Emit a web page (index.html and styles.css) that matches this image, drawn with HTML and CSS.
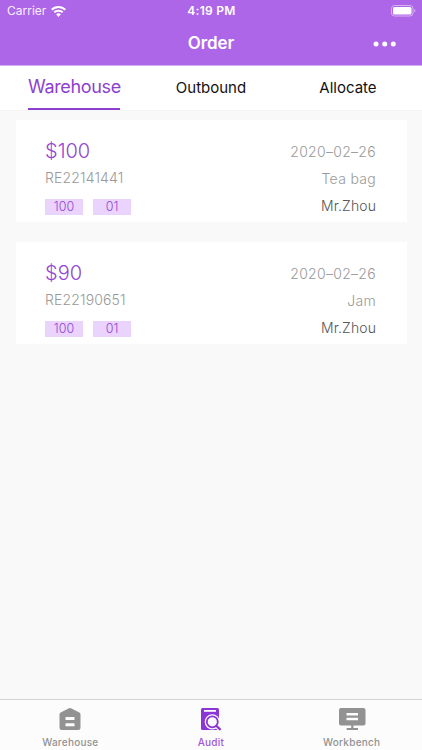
FILE: index.html
```html
<!DOCTYPE html>
<html lang="en">
<head>
<meta charset="utf-8">
<title>Order</title>
<link rel="stylesheet" href="styles.css">
</head>
<body>
<header class="header">
  <div class="status">
    <div class="carrier"><span>Carrier</span>
      <svg class="wifi" width="15" height="11" viewBox="0 0 15 11" fill="#fff"><path d="M7.5 0C4.6 0 1.900 1.100 0 3l1.400 1.500a8.700 8.700 0 0 1 12.200 0L15 3A10.700 10.700 0 0 0 7.500 0zM7.500 3.700c-1.900 0-3.600.7-4.900 1.900L4 7.100a5.100 5.100 0 0 1 7 0l1.400-1.500a7.100 7.100 0 0 0-4.900-1.900zM7.500 7.300c-1 0-1.800.4-2.400 1L7.500 11l2.400-2.700c-.6-.6-1.400-1-2.400-1z"/></svg>
    </div>
    <span class="time">4:19 PM</span>
    <svg class="battery" width="25" height="12" viewBox="0 0 25 12"><rect x=".5" y=".5" width="21.5" height="10.5" rx="3" fill="none" stroke="#d7b2f5"/><rect x="2" y="2" width="18.5" height="7.5" rx="1.5" fill="#fff"/><path d="M23.3 4v3.500q1.200-.5 1.200-1.750T23.300 4" fill="#d7b2f5"/></svg>
  </div>
  <div class="titlebar">
    <h1 class="title">Order</h1>
    <svg class="more" width="24" height="6" viewBox="0 0 24 6" fill="#fff"><circle cx="3" cy="3" r="2.5"/><circle cx="11.7" cy="3" r="2.5"/><circle cx="20.3" cy="3" r="2.5"/></svg>
  </div>
</header>
<nav class="tabs">
  <span class="tab active">Warehouse</span>
  <span class="tab">Outbound</span>
  <span class="tab">Allocate</span>
</nav>
<main class="list">
  <article class="card">
    <div class="left">
      <div class="price">$100</div>
      <div class="code">RE22141441</div>
      <div class="tags"><span class="tag">100</span><span class="tag">01</span></div>
    </div>
    <div class="right">
      <div class="date">2020–02–26</div>
      <div class="product">Tea bag</div>
      <div class="person">Mr.Zhou</div>
    </div>
  </article>
  <article class="card">
    <div class="left">
      <div class="price">$90</div>
      <div class="code">RE22190651</div>
      <div class="tags"><span class="tag">100</span><span class="tag">01</span></div>
    </div>
    <div class="right">
      <div class="date">2020–02–26</div>
      <div class="product">Jam</div>
      <div class="person">Mr.Zhou</div>
    </div>
  </article>
</main>
<footer class="bottom">
  <div class="item">
    <svg width="28" height="24" viewBox="0 0 28 24"><path d="M12.500 1.400q1.500-.9 3 0l7.800 4.200q1.200.7 1.200 2V20.500q0 2.500-2.500 2.500H6q-2.500 0-2.500-2.500V7.600q0-1.300 1.200-2z" fill="#929292"/><path d="M9.500 10h9v3h-9zM9.500 16.300h9v3h-9z" fill="#fcfcfc"/></svg>
    <span>Warehouse</span>
  </div>
  <div class="item selected">
    <svg width="28" height="24" viewBox="0 0 28 24"><rect x="4" y="1" width="18" height="22" rx="1.5" fill="#8b35d6"/><path d="M7 3h12v1.800H7z" fill="#fcfcfc"/><circle cx="15.3" cy="14.8" r="7.6" fill="#fcfcfc"/><path d="M19 18l5 5" stroke="#fcfcfc" stroke-width="5"/><circle cx="15.3" cy="14.8" r="5.5" fill="none" stroke="#8b35d6" stroke-width="1.8"/><path d="M19 18.500l4.600 4.400" stroke="#8b35d6" stroke-width="2.2"/></svg>
    <span>Audit</span>
  </div>
  <div class="item">
    <svg width="28" height="24" viewBox="0 0 28 24"><rect x="1" y="1" width="26.5" height="17.5" rx="2" fill="#929292"/><path d="M8.500 6h11.500v2.500H8.500zM8.500 10.700h11.500v2.500H8.500z" fill="#fcfcfc"/><path d="M13.200 18h2.200v3h4.600v2H8.700v-2h4.500z" fill="#929292"/></svg>
    <span>Workbench</span>
  </div>
</footer>
</body>
</html>
```
FILE: styles.css
```css
* { box-sizing: border-box; }
body {
  margin: 0;
  width: 422px;
  height: 750px;
  display: flex;
  flex-direction: column;
  background: #f9f9f9;
  font-family: Inter, "Liberation Sans", sans-serif;
  overflow: hidden;
}
.header { height: 66px; background: #ae66e9; color: #fff; border-bottom: 1px solid #d5b0f4; flex: none; }
.status { height: 22px; display: grid; grid-template-columns: 1fr auto 1fr; align-items: center; padding: 0 6px 0 7px; }
.carrier { display: flex; align-items: center; gap: 5px; font-size: 12px; line-height: 22px; color: #f8effe; }
.time { font-size: 12px; font-weight: 600; line-height: 22px; letter-spacing: .3px; }
.battery { justify-self: end; }
.titlebar { height: 43px; display: grid; grid-template-columns: 1fr auto 1fr; align-items: center; padding: 0 25px; }
.title { grid-column: 2; margin: 0; font-size: 17px; line-height: 43px; font-weight: 600; letter-spacing: -.1px; }
.more { justify-self: end; }
.tabs { flex: none; height: 44px; display: grid; grid-template-columns: 92px 1fr 92px; padding: 0 28px; background: #fff; color: #111; font-size: 15px; line-height: 43px; text-align: center; }
.tab.active { color: #8d3fd0; font-size: 18px; letter-spacing: -.35px; border-bottom: 2px solid #8d3fd0; white-space: nowrap; line-height: 42px; }
.list { flex: 1; padding: 9px 15px 0 16px; display: flex; flex-direction: column; gap: 20px; border-top: 1px solid #f5f5f5; }
.card { height: 102px; background: #fff; display: flex; justify-content: space-between; padding: 17px 31px 0 29px; font-weight: 300; }
.price { height: 28px; line-height: 28px; font-size: 20px; color: #9145d2; }
.code { height: 27px; line-height: 26px; font-size: 14px; letter-spacing: .15px; color: #999; }
.tags { display: flex; gap: 10px; margin-top: 7px; }
.tag { width: 38px; height: 16px; line-height: 16px; background: #ead3fc; color: #9145d2; text-align: center; font-size: 12.5px; }
.right { text-align: right; font-size: 14px; line-height: 27px; color: #999; padding-top: 1px; }
.date { letter-spacing: .3px; }
.product { letter-spacing: .3px; }
.person { color: #555; letter-spacing: .1px; }
.bottom { flex: none; height: 51px; border-top: 1px solid #d3d3d3; background: #fcfcfc; display: grid; grid-template-columns: repeat(3, 1fr); }
.item { display: flex; flex-direction: column; align-items: center; padding-top: 7px; color: #929292; font-size: 10px; font-weight: 500; line-height: 12px; letter-spacing: .25px; }
.item span { margin-top: 5px; }
.selected { color: #a057dc; }
```
